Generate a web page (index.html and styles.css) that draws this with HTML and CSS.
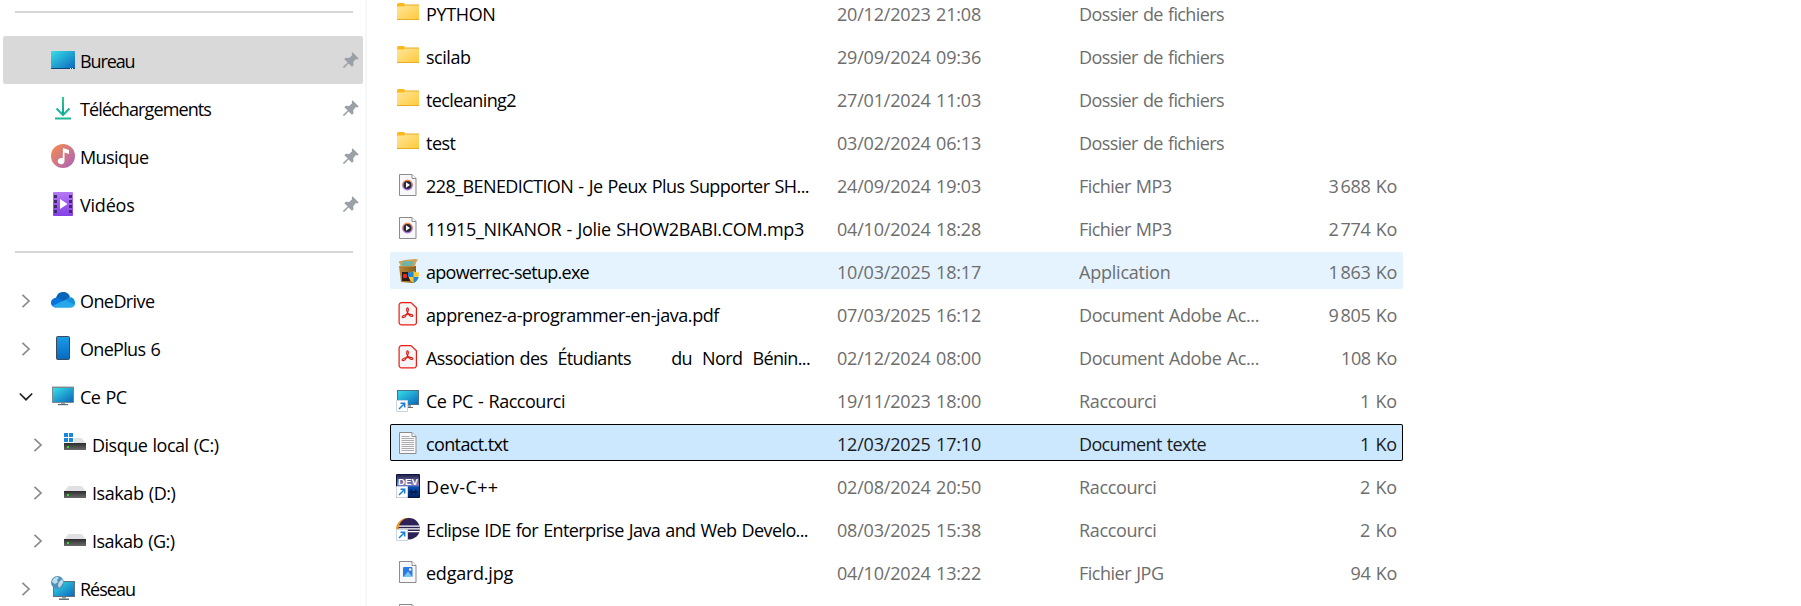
FILE: index.html
```html
<!DOCTYPE html>
<html lang="fr">
<head>
<meta charset="utf-8">
<title>Bureau</title>
<link rel="stylesheet" href="styles.css">
</head>
<body>
<svg class="defs" aria-hidden="true">
  <defs>
    <linearGradient id="screen" x1="0" y1="0" x2="1" y2="1"><stop offset="0" stop-color="#37dfe6"/><stop offset="1" stop-color="#0b66bd"/></linearGradient>
    <linearGradient id="yellow" x1="0" y1="0" x2="1" y2="1"><stop offset="0" stop-color="#ffe69c"/><stop offset="1" stop-color="#ffca3a"/></linearGradient>
    <linearGradient id="green" x1="0" y1="0" x2="0" y2="1"><stop offset="0" stop-color="#30ca92"/><stop offset="1" stop-color="#0fa09b"/></linearGradient>
    <linearGradient id="music" x1="0" y1="0" x2="1" y2="1"><stop offset="0.1" stop-color="#f08a55"/><stop offset="1" stop-color="#a860c0"/></linearGradient>
    <linearGradient id="violet" x1="0" y1="0" x2="0" y2="1"><stop offset="0" stop-color="#b57af4"/><stop offset="1" stop-color="#8340e6"/></linearGradient>
    <linearGradient id="phone" x1="0" y1="0" x2="0" y2="1"><stop offset="0" stop-color="#1c9ce8"/><stop offset="1" stop-color="#0669bf"/></linearGradient>
    <linearGradient id="drivebody" x1="0" y1="0" x2="0" y2="1"><stop offset="0" stop-color="#2c2c2c"/><stop offset="1" stop-color="#6b6b6b"/></linearGradient>
    <linearGradient id="ring" x1="0" y1="0" x2="0" y2="1"><stop offset="0" stop-color="#ff8a3c"/><stop offset="1" stop-color="#a56be0"/></linearGradient>
    <linearGradient id="devbg" x1="0" y1="0" x2="0" y2="1"><stop offset="0" stop-color="#23224f"/><stop offset="0.45" stop-color="#8a88c0"/><stop offset="0.55" stop-color="#0a4fb0"/><stop offset="1" stop-color="#04245f"/></linearGradient>
    <linearGradient id="carton" x1="0" y1="0" x2="1" y2="0"><stop offset="0" stop-color="#b98336"/><stop offset="1" stop-color="#87601f"/></linearGradient>
    <symbol id="desktop" viewBox="0 0 24 24"><rect y="3" width="24" height="18" rx="1" fill="url(#screen)"/><path d="M0 20h24v0.2q0 .8-1 .8H1q-1 0-1-.8z" fill="#0b4676"/><path d="M19 20h1v1h-1zM21 20h1v1h-1z" fill="#dff"/></symbol>
    <symbol id="download" viewBox="0 0 24 24"><path d="M5.500 12.500L12 19l6.500-6.500M4 22.500h16" fill="none" stroke="#1fb796" stroke-width="2"/><path d="M11 1h2v17h-2z" fill="url(#green)"/></symbol>
    <symbol id="musique" viewBox="0 0 24 24"><circle cx="12" cy="12" r="12" fill="url(#music)"/><path d="M12 4l6 2v4l-4.500-1.600V17a3.400 3.200 0 1 1-1.800-2.700z" fill="#fff"/></symbol>
    <symbol id="video" viewBox="0 0 24 24"><rect x="2" width="20" height="24" rx="1" fill="url(#violet)"/><path d="M3 3h3v3H3zm0 5h3v3H3zm0 5h3v3H3zm0 5h3v3H3zM18 3h3v3h-3zm0 5h3v3h-3zm0 5h3v3h-3zm0 5h3v3h-3z" fill="#43276f"/><path d="M9 7l7.500 5L9 17z" fill="#fff"/></symbol>
    <symbol id="pin" viewBox="0 0 16 16"><path d="M9.500.3l6.200 6.200-1.300.9-1.500-.3-2.600 2.900.2 3.200-1.500 1.500-3.500-3.300-4 4.300H.2v-1.100l4.500-4L1.300 7.200l1.400-1.500 3.500.3 2.900-2.700-.4-1.600z" fill="#98a1a8"/></symbol>
    <symbol id="onedrive" viewBox="0 0 24 24"><path d="M5 10C6 5.500 9.500 4 12 4c3.500 0 6.300 2 7 5l-6 5z" fill="#0364b8"/><path d="M5 19.500C2 19.500 0 17.500 0 14.800 0 12 2.300 9.700 5.300 9.700c1 0 2 .3 3 .8l7 4L5 19.500z" fill="#0a74d8"/><path d="M14 13.500l3-3.500c3.500-2.200 7 .8 7 5 0 1-.2 1.600-.6 2.500z" fill="#1490df"/><path d="M1.500 17.800L14 12l9.800 4.800c-.8 2-2.300 2.900-4.300 2.900H5c-1.500 0-2.600-.6-3.500-1.900z" fill="#28a8ea"/></symbol>
    <symbol id="mobile" viewBox="0 0 24 24"><rect x="5.500" y=".5" width="13" height="23" rx="1" fill="url(#phone)" stroke="#3b4a5a"/></symbol>
    <symbol id="pc" viewBox="0 0 24 24"><rect x="1" y="2" width="22" height="17" rx=".8" fill="#7a8a90"/><rect x="1" y="2" width="22" height="1" fill="#c6cccf"/><rect x="2" y="4" width="20" height="14" fill="url(#screen)"/><path d="M10 19h4v1h-4z" fill="#9aa3a8"/><path d="M7 20h10v1.200H7z" fill="#5f686d"/></symbol>
    <symbol id="drive" viewBox="0 0 24 24"><path d="M5.500 6h13L23 11.500H1z" fill="#e0e1e3"/><rect x="1" y="11" width="22" height="7" fill="url(#drivebody)"/><rect x="4" y="14" width="2" height="2" fill="#33e02e"/></symbol>
    <symbol id="windrive" viewBox="0 0 24 24"><path d="M5.500 6h13L23 11.500H1z" fill="#e0e1e3"/><rect x="1" y="11" width="22" height="7" fill="url(#drivebody)"/><rect x="4" y="14" width="2" height="2" fill="#33e02e"/><path d="M0 0h11v11H0z" fill="#fff"/><path d="M1 1h4v4H1zm5 0h4v4H6zM1 6h4v4H1zm5 0h4v4H6z" fill="#1689dc"/></symbol>
    <symbol id="network" viewBox="0 0 24 24"><rect x="2.500" y="5.500" width="21" height="15" fill="url(#screen)" stroke="#60717b"/><path d="M11 21h4v1.500h-4z" fill="#9aa3a8"/><path d="M8 22.500h10V24H8z" fill="#667075"/><circle cx="6.500" cy="6.500" r="6.500" fill="#4f91b9"/><path d="M2 3l4-2.500L8 2 6 4l1 2-3 2-3-2zM8 6l3-3 1.500 3L10 10 8 12 7 9z" fill="#c0dce9"/></symbol>
    <symbol id="folder" viewBox="0 0 24 24"><path d="M1 3.500Q1 2 2.500 2H8l1.500 2H23v3H1z" fill="#fbb91c"/><path d="M1 5.500h7L9.500 4H23v15H1z" fill="url(#yellow)"/><path d="M9.500 3.500H23v1H9zM1 18h22v1H1z" fill="#e8ac25"/></symbol>
    <symbol id="page" viewBox="0 0 24 24"><path d="M3.500 1.500h12.500l4 4v17h-16.500z" fill="#f8f8fa" stroke="#8b8b8b"/><path d="M16 1.500V5.500h4" fill="#fff" stroke="#8b8b8b"/></symbol>
    <symbol id="mp3" viewBox="0 0 24 24"><use href="#page"/><circle cx="11.500" cy="12" r="4.700" fill="#26283a" stroke="url(#ring)" stroke-width="1.500"/><path d="M10 9.300l4 2.700-4 2.700z" fill="#fff"/></symbol>
    <symbol id="txt" viewBox="0 0 24 24"><use href="#page"/><path d="M5.500 5.500h8M5.500 7.500h12.500M5.500 9.500h12.500M5.500 11.500h12.500M5.500 13.500h12.500M5.500 15.500h12.500M5.500 17.500h12.500M5.500 19.500h12.500" stroke="#a3a3a3" stroke-width=".9"/></symbol>
    <symbol id="jpg" viewBox="0 0 24 24"><use href="#page"/><rect x="7" y="7" width="9.500" height="10" rx="1" fill="#2b7be0"/><path d="M7.500 17l4.500-5.500 4.500 5.500z" fill="#7cc4f5"/><circle cx="14.200" cy="9.500" r="1.200" fill="#fff"/></symbol>
    <symbol id="pdf" viewBox="0 0 24 24"><path d="M5.500 .6h9.500l5.400 5.200v14.700a2.400 2.400 0 0 1-2.400 2.400H5.500a2.400 2.400 0 0 1-2.400-2.400V3a2.400 2.400 0 0 1 2.400-2.400z" fill="#f6f5f5" stroke="#ee1b12" stroke-width="1.200"/><path d="M11.500 10.500c-1.300-2.500-1-4.700 0-4.700s1.300 2.200 0 4.700c-1 2.500-3 5-4.300 5.200-1.200 0-1.500-1.200 0-2 2-1 5.500-1.700 7.800-1.400 2 .2 2.300 2 .8 2.200-1.500 0-3.300-2-4.300-4z" fill="none" stroke="#e0211b" stroke-width="1.200"/></symbol>
    <symbol id="setup" viewBox="0 0 24 24"><path d="M3 7h17v15.500L17 24 5 23z" fill="url(#carton)"/><path d="M2.500 2.500L9 1l10-1 3 .5-2 3-1 4H5z" fill="#d0a35a"/><path d="M7 2l11 .5-2 4.500H5.500z" fill="#6fb5a6"/><rect x="6" y="13" width="8" height="9" fill="#2d1a18"/><circle cx="9" cy="17" r="2.200" fill="#e52b25"/><path d="M17.500 12q3 2 5.500 1.500 0 8-5.500 10.500Q12 21 12 13.500q3 .5 5.500-1.500z" fill="#f9c82e"/><path d="M17.500 12v6H12.200q-.4-2-.2-4.500 3 .5 5.500-1.500zM17.500 18h5.200q-1.200 4.500-5.200 6z" fill="#2189db"/></symbol>
    <symbol id="arrow" viewBox="0 0 24 24"><path d="M.5 12.500h11v11H.5z" fill="#fff" stroke="#c9d5e3"/><path d="M3 21l5.500-5.500M4.500 15.300H8.700v4.200" fill="none" stroke="#1b7fd3" stroke-width="1.500"/></symbol>
    <symbol id="pclink" viewBox="0 0 24 24"><rect x="1.500" y="2.500" width="21" height="14" fill="url(#screen)" stroke="#49718c"/><path d="M11 17h4v3h-4z" fill="#9aa3a8"/><path d="M8 19h9v1H8z" fill="#667075"/><use href="#arrow"/></symbol>
    <symbol id="dev" viewBox="0 0 24 24"><rect width="24" height="24" rx="1" fill="#0c1742"/><rect x="1" y="1" width="22" height="22" fill="url(#devbg)"/><text x="2" y="11" class="dev-label" textLength="20" lengthAdjust="spacingAndGlyphs">DEV</text><path d="M13 18l3-3v2h3v-2l3 3-3 3v-2h-3v2z" fill="#061c4c"/><use href="#arrow"/></symbol>
    <symbol id="eclipse" viewBox="0 0 24 24"><path d="M0 12A12 11.500 0 0 1 14 1Q4 5 4 14H0z" fill="#f7941e"/><ellipse cx="13.200" cy="11.700" rx="10.700" ry="10.700" fill="#2c2255"/><path d="M2.700 8.500h21v1.300h-21zM2.700 11.300h21.200v1.300H2.700zM2.700 14h21v1.200h-21z" fill="#fff"/><use href="#arrow"/></symbol>
    <symbol id="closed" viewBox="0 0 14 14"><path d="M3.500 .8L10 7l-6.500 6.200" fill="none" stroke="#8b8b8b" stroke-width="1.700"/></symbol>
    <symbol id="open" viewBox="0 0 14 14"><path d="M.8 3.500L7 9.700l6.200-6.200" fill="none" stroke="#222" stroke-width="1.700"/></symbol>
  </defs>
</svg>
<div class="explorer">
  <nav class="sidebar">
    <div class="divider"></div>
    <a class="place current"><i class="chevron"></i><svg class="icon"><use href="#desktop"/></svg><span class="label" data-w="54.500">Bureau</span><svg class="pin"><use href="#pin"/></svg></a>
    <a class="place"><i class="chevron"></i><svg class="icon"><use href="#download"/></svg><span class="label" data-w="131">Téléchargements</span><svg class="pin"><use href="#pin"/></svg></a>
    <a class="place"><i class="chevron"></i><svg class="icon"><use href="#musique"/></svg><span class="label" data-w="68.500">Musique</span><svg class="pin"><use href="#pin"/></svg></a>
    <a class="place"><i class="chevron"></i><svg class="icon"><use href="#video"/></svg><span class="label" data-w="54.500">Vidéos</span><svg class="pin"><use href="#pin"/></svg></a>
    <div class="divider"></div>
    <a class="place"><svg class="chevron"><use href="#closed"/></svg><svg class="icon"><use href="#onedrive"/></svg><span class="label" data-w="74.500">OneDrive</span></a>
    <a class="place"><svg class="chevron"><use href="#closed"/></svg><svg class="icon"><use href="#mobile"/></svg><span class="label" data-w="80">OnePlus 6</span></a>
    <a class="place"><svg class="chevron"><use href="#open"/></svg><svg class="icon"><use href="#pc"/></svg><span class="label" data-w="46.500">Ce PC</span></a>
    <a class="place nested"><svg class="chevron"><use href="#closed"/></svg><svg class="icon"><use href="#windrive"/></svg><span class="label" data-w="126.500">Disque local (C:)</span></a>
    <a class="place nested"><svg class="chevron"><use href="#closed"/></svg><svg class="icon"><use href="#drive"/></svg><span class="label" data-w="83.500">Isakab (D:)</span></a>
    <a class="place nested"><svg class="chevron"><use href="#closed"/></svg><svg class="icon"><use href="#drive"/></svg><span class="label" data-w="82.500">Isakab (G:)</span></a>
    <a class="place"><svg class="chevron"><use href="#closed"/></svg><svg class="icon"><use href="#network"/></svg><span class="label" data-w="55">Réseau</span></a>
  </nav>
  <main class="files">
    <div class="file"><svg class="icon"><use href="#folder"/></svg><span class="name" data-w="69.500">PYTHON</span><span class="date" data-w="144">20/12/2023 21:08</span><span class="type" data-w="145">Dossier de fichiers</span><span class="size"></span></div>
    <div class="file"><svg class="icon"><use href="#folder"/></svg><span class="name" data-w="44.500">scilab</span><span class="date" data-w="144">29/09/2024 09:36</span><span class="type" data-w="145">Dossier de fichiers</span><span class="size"></span></div>
    <div class="file"><svg class="icon"><use href="#folder"/></svg><span class="name" data-w="90">tecleaning2</span><span class="date" data-w="144">27/01/2024 11:03</span><span class="type" data-w="145">Dossier de fichiers</span><span class="size"></span></div>
    <div class="file"><svg class="icon"><use href="#folder"/></svg><span class="name" data-w="29.500">test</span><span class="date" data-w="144">03/02/2024 06:13</span><span class="type" data-w="145">Dossier de fichiers</span><span class="size"></span></div>
    <div class="file"><svg class="icon"><use href="#mp3"/></svg><span class="name" data-w="383">228_BENEDICTION - Je Peux Plus Supporter SH...</span><span class="date" data-w="144">24/09/2024 19:03</span><span class="type" data-w="92.500">Fichier MP3</span><span class="size" data-w="68.500">3&#8239;688 Ko</span></div>
    <div class="file"><svg class="icon"><use href="#mp3"/></svg><span class="name" data-w="378">11915_NIKANOR - Jolie SHOW2BABI.COM.mp3</span><span class="date" data-w="144">04/10/2024 18:28</span><span class="type" data-w="92.500">Fichier MP3</span><span class="size" data-w="68.500">2&#8239;774 Ko</span></div>
    <div class="file hovered"><svg class="icon"><use href="#setup"/></svg><span class="name" data-w="163">apowerrec-setup.exe</span><span class="date" data-w="144">10/03/2025 18:17</span><span class="type" data-w="91.500">Application</span><span class="size" data-w="68.500">1&#8239;863 Ko</span></div>
    <div class="file"><svg class="icon"><use href="#pdf"/></svg><span class="name" data-w="293">apprenez-a-programmer-en-java.pdf</span><span class="date" data-w="144">07/03/2025 16:12</span><span class="type" data-w="180">Document Adobe Ac...</span><span class="size" data-w="68.500">9&#8239;805 Ko</span></div>
    <div class="file"><svg class="icon"><use href="#pdf"/></svg><span class="name" data-w="384">Association des  Étudiants        du  Nord  Bénin...</span><span class="date" data-w="144">02/12/2024 08:00</span><span class="type" data-w="180">Document Adobe Ac...</span><span class="size" data-w="56">108 Ko</span></div>
    <div class="file"><svg class="icon"><use href="#pclink"/></svg><span class="name" data-w="139">Ce PC - Raccourci</span><span class="date" data-w="144">19/11/2023 18:00</span><span class="type" data-w="77.500">Raccourci</span><span class="size" data-w="37">1 Ko</span></div>
    <div class="file selected"><svg class="icon"><use href="#txt"/></svg><span class="name" data-w="82">contact.txt</span><span class="date" data-w="144">12/03/2025 17:10</span><span class="type" data-w="127">Document texte</span><span class="size" data-w="37">1 Ko</span></div>
    <div class="file"><svg class="icon"><use href="#dev"/></svg><span class="name" data-w="72.500">Dev-C++</span><span class="date" data-w="144">02/08/2024 20:50</span><span class="type" data-w="77.500">Raccourci</span><span class="size" data-w="37">2 Ko</span></div>
    <div class="file"><svg class="icon"><use href="#eclipse"/></svg><span class="name" data-w="382">Eclipse IDE for Enterprise Java and Web Develo...</span><span class="date" data-w="144">08/03/2025 15:38</span><span class="type" data-w="77.500">Raccourci</span><span class="size" data-w="37">2 Ko</span></div>
    <div class="file"><svg class="icon"><use href="#jpg"/></svg><span class="name" data-w="87">edgard.jpg</span><span class="date" data-w="144">04/10/2024 13:22</span><span class="type" data-w="84.500">Fichier JPG</span><span class="size" data-w="46.500">94 Ko</span></div>
    <div class="file"><svg class="icon"><use href="#page"/></svg></div>
  </main>
</div>
<script src="fit.js"></script>
</body>
</html>
```

FILE: styles.css
```css
* { box-sizing: border-box; }

body {
  margin: 0;
  height: 606px;
  overflow: hidden;
  background: #fff;
  color: #000;
  font: 18px/24px "Open Sans", "Noto Sans", sans-serif;
  word-spacing: 1px;
}

.defs { position: absolute; width: 0; height: 0; }

.explorer { display: flex; height: 606px; overflow: hidden; }

.sidebar {
  flex: none;
  width: 367px;
  height: 624px;
  margin-top: -12px;
  padding: 0 2px 0 3px;
  border-right: 2px solid #f7f7f7;
}

.divider { display: flex; align-items: center; height: 48px; padding: 0 10px 0 12px; }
.divider::after { content: ""; flex: 1; height: 2px; background: #d5d5d5; }

.place {
  display: flex;
  align-items: center;
  width: 360px;
  height: 48px;
  padding: 0 4px 0 16px;
  border-radius: 2px;
}
.place.current { background: #d9d9d9; }
.place.nested { padding-left: 28px; }

.chevron { flex: none; width: 14px; height: 14px; margin: 1px 18px 0 0; }
.icon { flex: none; width: 24px; height: 24px; }
.label { margin-left: 5px; padding-top: 1px; white-space: pre; }
.pin { width: 16px; height: 16px; margin-left: auto; }

.files {
  display: flex;
  flex-direction: column;
  gap: 6px;
  margin-top: -6px;
  padding-left: 23px;
}

.file {
  display: grid;
  grid-template-columns: 24px 417px 242px 190px 128px;
  align-items: center;
  flex: none;
  width: 1013px;
  height: 37px;
  padding: 1px 6px 0;
  border-radius: 2px;
  white-space: pre;
}
.file.hovered { background: #e5f3ff; }
.file.selected { background: #cce8ff; box-shadow: inset 0 0 0 1px #000; }

.name { margin-left: 6px; justify-self: start; }
.name, .date, .type, .size { padding-top: 2px; }
.date, .type, .size { justify-self: start; color: #6d6d6d; }
.size { justify-self: end; }
.selected .date, .selected .type, .selected .size { color: #1b1b1b; }

.dev-label { font: bold 9px "Liberation Sans", sans-serif; fill: #fff; }
```

FILE: fit.js
```js
document.querySelectorAll("[data-w]").forEach(function (el) {
  var natural = el.getBoundingClientRect().width;
  var spacing = (Number(el.dataset.w) - natural) / el.textContent.length;
  el.style.letterSpacing = spacing.toFixed(3) + "px";
});
```
